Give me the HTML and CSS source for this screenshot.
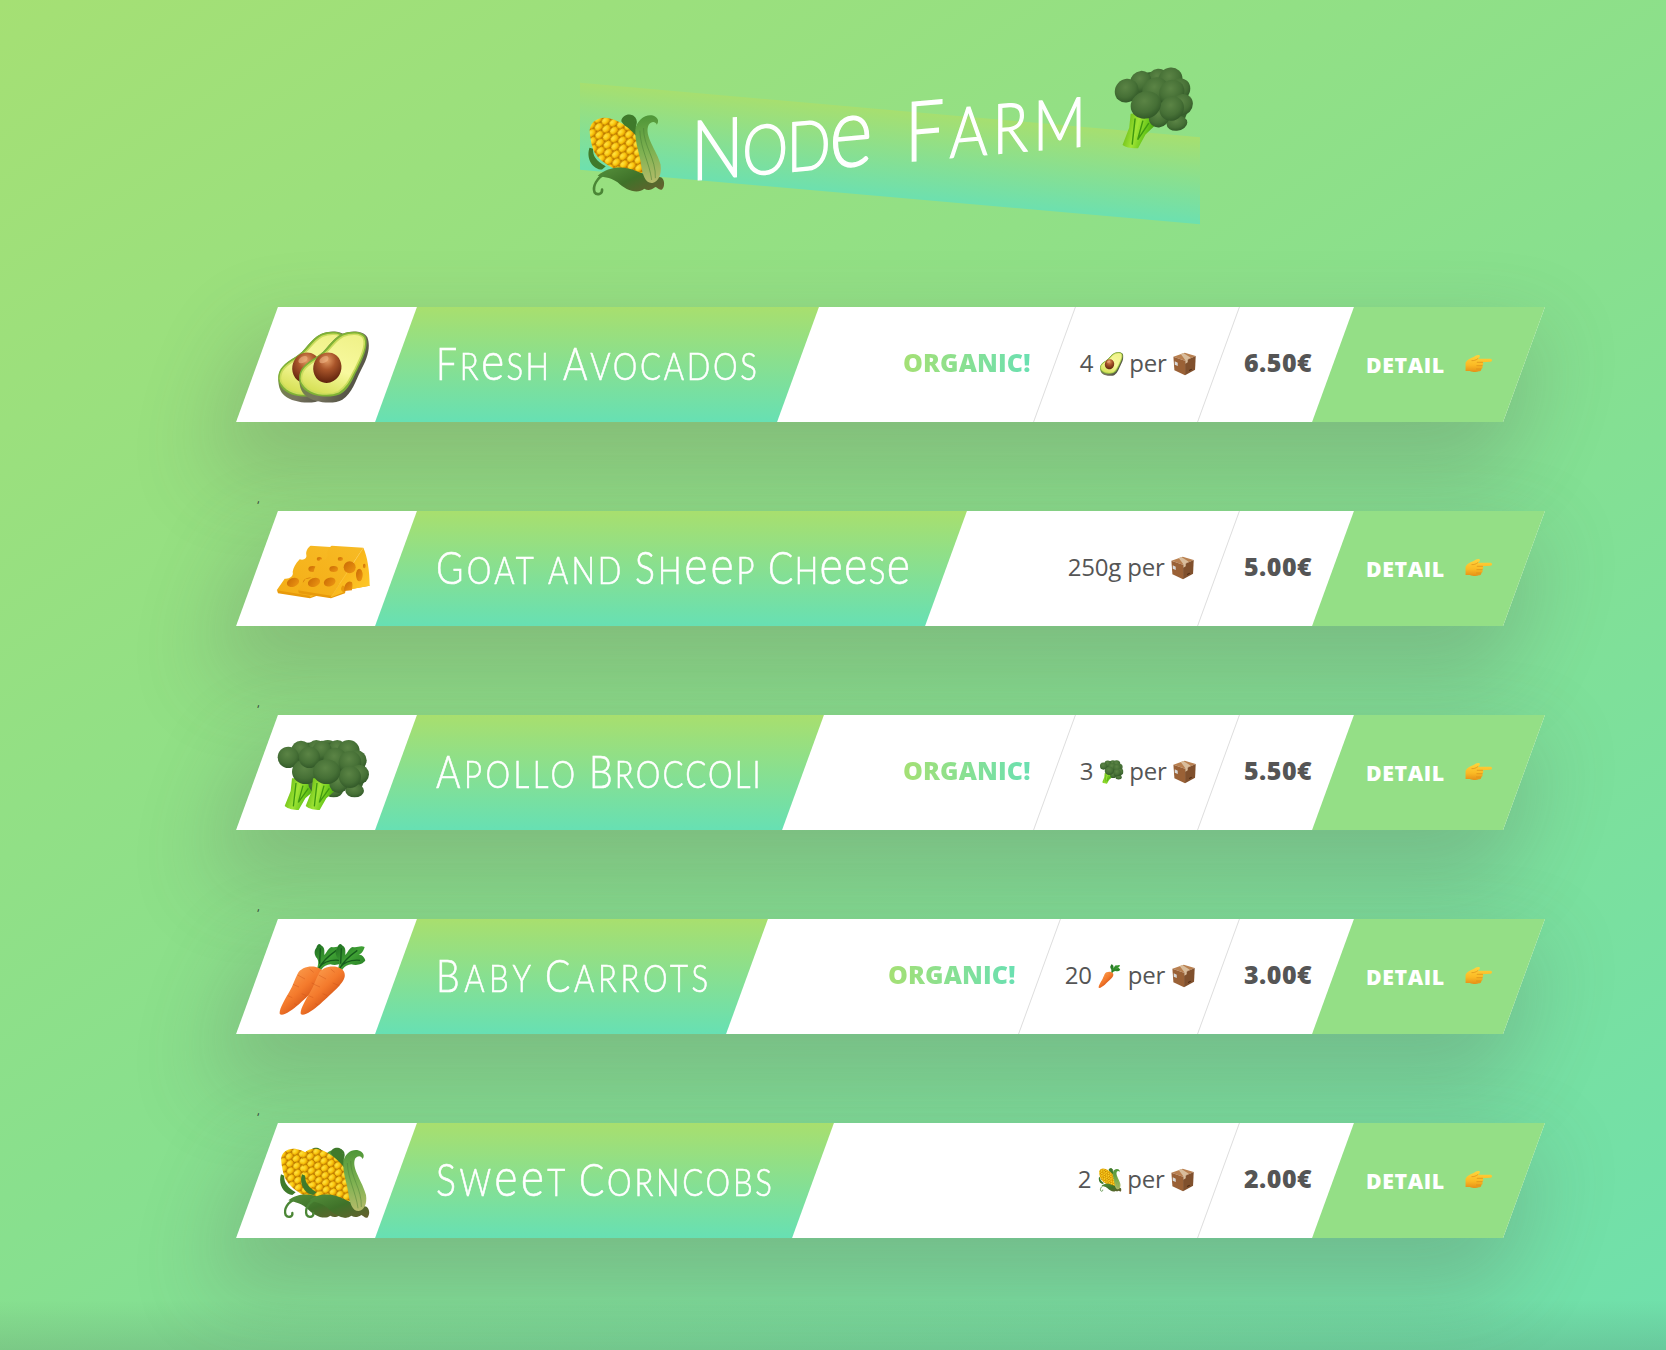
FILE: index.html
```html
<!DOCTYPE html>
<html lang="en">
<head>
<meta charset="utf-8">
<title>Node Farm</title>
<link rel="stylesheet" href="styles.css">
</head>
<body>
<svg class="defs" width="0" height="0" aria-hidden="true">
  <defs>
    <linearGradient id="flesh" x1=".7" y1="0" x2=".3" y2="1"><stop offset="0" stop-color="#f0f28a"/><stop offset=".55" stop-color="#f8f99f"/><stop offset="1" stop-color="#d6e055"/></linearGradient>
    <radialGradient id="pit" cx=".42" cy=".28" r=".75"><stop offset="0" stop-color="#e39a63"/><stop offset=".4" stop-color="#a9552a"/><stop offset="1" stop-color="#5c200b"/></radialGradient>
    <linearGradient id="skin" x1="0" y1="0" x2="1" y2=".6"><stop offset="0" stop-color="#6f9a2c"/><stop offset=".6" stop-color="#77745f"/><stop offset="1" stop-color="#4a4a3e"/></linearGradient>
    <linearGradient id="cheeseTop" x1="0" y1="1" x2="1" y2="0"><stop offset="0" stop-color="#f4ad16"/><stop offset="1" stop-color="#f7bb25"/></linearGradient>
    <linearGradient id="cheeseSide" x1="0" y1="0" x2="1" y2="1"><stop offset="0" stop-color="#f4a70f"/><stop offset="1" stop-color="#ffcb2c"/></linearGradient>
    <linearGradient id="hole" x1="0" y1="0" x2="1" y2="1"><stop offset="0" stop-color="#c96a05"/><stop offset="1" stop-color="#ee9712"/></linearGradient>
    <radialGradient id="floret" cx=".45" cy=".35" r=".65"><stop offset="0" stop-color="#5b8445"/><stop offset=".65" stop-color="#467036"/><stop offset="1" stop-color="#335a29"/></radialGradient>
    <linearGradient id="stem" x1="0" y1=".3" x2="1" y2=".6"><stop offset="0" stop-color="#5fb410"/><stop offset=".4" stop-color="#a0e535"/><stop offset=".7" stop-color="#65c518"/><stop offset="1" stop-color="#3d8d10"/></linearGradient>
    <linearGradient id="root" x1=".2" y1=".2" x2=".7" y2=".8"><stop offset="0" stop-color="#fa9a4b"/><stop offset=".5" stop-color="#f47a2c"/><stop offset="1" stop-color="#cf4d13"/></linearGradient>
    <linearGradient id="leaf" x1="0" y1="0" x2="1" y2="1"><stop offset="0" stop-color="#1d6b20"/><stop offset=".5" stop-color="#3fa034"/><stop offset="1" stop-color="#237a22"/></linearGradient>
    <linearGradient id="husk" x1="0" y1="0" x2="0" y2="1"><stop offset="0" stop-color="#4f9638"/><stop offset=".55" stop-color="#80b252"/><stop offset="1" stop-color="#b5bb6a"/></linearGradient>
    <linearGradient id="huskDark" x1="0" y1="0" x2="1" y2="1"><stop offset="0" stop-color="#558f3b"/><stop offset=".5" stop-color="#3f7229"/><stop offset="1" stop-color="#67602f"/></linearGradient>
    <radialGradient id="kernel" cx=".4" cy=".3" r=".7"><stop offset="0" stop-color="#ffe445"/><stop offset=".6" stop-color="#fbc80f"/><stop offset="1" stop-color="#e39d00"/></radialGradient>
    <pattern id="kernels" width="24" height="36" patternUnits="userSpaceOnUse" patternTransform="rotate(-38)">
      <rect width="24" height="36" fill="#b87600"/>
      <ellipse cx="12" cy="9" rx="11.2" ry="9" fill="url(#kernel)"/>
      <ellipse cx="0" cy="27" rx="11.2" ry="9" fill="url(#kernel)"/>
      <ellipse cx="24" cy="27" rx="11.2" ry="9" fill="url(#kernel)"/>
    </pattern>
    <linearGradient id="hand" x1="0" y1="0" x2="0" y2="1"><stop offset="0" stop-color="#ffd53d"/><stop offset=".6" stop-color="#fbb924"/><stop offset="1" stop-color="#e58f17"/></linearGradient>

    <symbol id="avocado" viewBox="0 0 216 216">
      <path fill="url(#skin)" d="M4 150C2 118 20 98 55 78 88 58 98 26 132 9 155-1 195-3 208 19c12 30-2 69-20 100-15 30-25 66-55 87-27 16-85 9-109-11C10 184 5 168 4 150z"/>
      <path fill="#7fb236" d="M4 142C2 116 20 98 55 78 88 58 98 26 132 9 153 0 191-2 202 16c12 27-8 68-24 100-15 29-24 58-52 74-29 12-78 8-101-10C11 170 5 158 4 142z"/>
      <path fill="url(#flesh)" stroke="#cbdc5c" stroke-width="5" d="M10 143c0-26 17-41 50-59 36-21 44-52 76-68 20-8 51-10 60 5 10 23-9 61-24 91-15 28-24 54-51 70-25 12-70 8-90-8-13-10-20-18-21-31z"/>
      <ellipse cx="88" cy="110" rx="42" ry="46" fill="url(#pit)" transform="rotate(18 88 110)"/>
      <ellipse cx="78" cy="86" rx="15" ry="9" fill="#f4bc8c" opacity=".55" transform="rotate(-30 78 86)"/>
    </symbol>

    <symbol id="cheese" viewBox="0 0 216 216" overflow="visible">
      <path fill="#e89a0b" d="M0 166l3 9 96 15 42-15 2-10 72-13-10-18z"/>
      <path fill="url(#cheeseTop)" d="M-1 166l24-35c14 2 28-8 24-20 2-12 8-25 21-38 14 4 22-4 20-13-2-12 4-22 13-28l95 6-96 144z"/>
      <path fill="url(#cheeseSide)" d="M196 38c12 25 19 70 19 114l-72 14c-1-10-8-20-12-11-3 6-3 12 6 17l-38 15z"/>
      <path fill="none" stroke="#fbc63f" stroke-width="2" d="M196 39L99 186"/>
      <g fill="url(#hole)"><ellipse cx="127" cy="72" rx="8" ry="6"/><ellipse cx="107" cy="102" rx="13" ry="9"/><ellipse cx="95" cy="141" rx="18" ry="13" transform="rotate(-20 95 141)"/><ellipse cx="48" cy="142" rx="19" ry="13" transform="rotate(-20 48 142)"/><ellipse cx="155" cy="97" rx="18" ry="18"/><ellipse cx="184" cy="120" rx="10" ry="19"/><ellipse cx="199" cy="93" rx="4" ry="7"/><path d="M138 168c0-24 14-34 24-26 3 8 0 18 0 24z"/></g>
    </symbol>

    <symbol id="broccoli" viewBox="0 0 216 216">
      <path fill="url(#stem)" d="M45 118l-4 38-18 45c10 9 28 12 42 12l20-35 32-28-6-32z"/>
      <path fill="none" stroke="#3f9a10" stroke-width="4" d="M57 132l-8 70M78 140l-14 50 30-42"/>
      <path fill="#3a632e" d="M40 40L70 12l80-4 46 50 10 50-20 50-40-4-30-40-70-30z"/>
      <g fill="url(#floret)"><circle cx="118" cy="30" r="27"/><circle cx="72" cy="34" r="29"/><circle cx="152" cy="36" r="33"/><ellipse cx="170" cy="155" rx="28" ry="20"/><circle cx="122" cy="134" r="28"/><circle cx="112" cy="62" r="36"/><circle cx="34" cy="55" r="32"/><circle cx="176" cy="64" r="30"/><circle cx="156" cy="70" r="34"/><circle cx="184" cy="106" r="29"/><circle cx="156" cy="114" r="33"/><ellipse cx="86" cy="98" rx="41" ry="37"/></g>
    </symbol>

    <symbol id="carrot" viewBox="0 0 216 216">
      <path fill="url(#leaf)" d="M120 78c4-14 6-22 0-32-8-10-10-22-2-32 4-12 10-14 16-6 10 6 8 16 8 28 8-8 10-20 22-24 14 4 22-6 36 0-4 12-8 20-20 24 10-2 18 4 22 16-8 14-28 16-42 12-10 2-20 4-28 18z"/>
      <path fill="none" stroke="#155c1b" stroke-width="4" d="M126 76c8-18 24-34 52-54M126 74c14-18 36-24 60-22M128 62L130 16"/>
      <path fill="url(#root)" d="M62 92c12-24 60-30 76-6 12 26-22 50-72 98-20 17-46 36-57 30-6-10 14-44 28-68 12-20 16-38 25-54z"/>
      <path fill="none" stroke="#c9521a" stroke-width="2" opacity=".6" d="M62 96l22 12M104 120l20 8M48 124l18 8M74 152l14 6M32 158l14 6M52 182l8 4M98 78l12 10"/>
    </symbol>

    <symbol id="corn" viewBox="0 0 216 216">
      <path fill="#3f7a2b" d="M12 82c-10 30 10 60 34 62l10-8C30 120 20 104 22 86zM98 18c2-20 34-22 36-2l8 52c-14-6-30-30-44-50z"/>
      <path fill="none" stroke="#3f7a2b" stroke-width="6" stroke-linecap="round" d="M112 8c20-6 30 10 22 28"/>
      <path fill="url(#kernels)" d="M13 44C8 12 40-4 72 10c38 14 82 58 94 104 6 28-2 52-24 52-42-4-106-40-119-76-6-16-8-30-10-46z"/>
      <path fill="url(#huskDark)" d="M34 160c28-24 72-22 104-4 22 12 44 16 62 22 14 0 18 24 8 34-8 2-12-6-18-8-12 8-20 8-30 2-18 14-50 0-72-24-22-16-42-18-54-22z"/>
      <path fill="none" stroke="#4b8636" stroke-width="7" stroke-linecap="round" d="M60 154c-30 10-40 34-34 50 6 9 22 7 20-6"/>
      <path fill="url(#husk)" d="M136 44c4-28 34-44 54-30 10 8 8 16 4 22-4-10-14-12-22-2-14 28 22 70 32 110 4 28-6 46-22 48-20 0-26-24-30-48-4-36-18-64-16-100z"/>
      <path fill="none" stroke="#477e34" stroke-width="2" opacity=".7" d="M148 48c2 50 26 88 32 136M158 42c0 50 34 84 32 138"/>
    </symbol>

    <symbol id="box" viewBox="0 0 72 72">
      <path fill="#b98050" d="M2 14L36 2l33 10-32 14z"/><path fill="#9a6136" d="M2 14l35 12v44L5 55z"/><path fill="#80502d" d="M69 12L37 26v44l30-17z"/>
      <path fill="#d9bd9c" d="M24 6l8-3 22 14-9 5v9l-7 4V25z"/><path fill="#d8d8d8" d="M6 28l9 4v10l-9-4z"/><path fill="#4a2711" d="M49 54l8-4v3l-8 4z"/>
    </symbol>

    <symbol id="finger" viewBox="0 0 84 66">
      <path fill="url(#hand)" d="M3 32c4-8 14-14 24-17 7-5 13-8 18-5 3 3 0 8-5 10l38 0c6 1 6 8 0 9l-24 2c4 4 3 8-1 10 3 5 1 8-3 10 1 5-2 7-7 7-8 4-20 2-27-1L3 57z"/>
      <path fill="none" stroke="#d98d18" stroke-width="2" stroke-linecap="round" d="M54 31H38M53 41H37M49 51H36M40 20c-6 5-12 6-18 6"/>
    </symbol>
  </defs>
</svg>

<div class="container">
  <h1 class="heading">
    <svg class="heading-icon"><use href="#corn"/></svg>
    <span class="word node" data-fit="182">Nod<span class="e">e</span></span>
    <span class="word farm" data-fit="181">Farm</span>
    <svg class="heading-icon broccoli"><use href="#broccoli"/></svg>
  </h1>

  <main class="cards">
    <figure class="card">
      <div class="emoji"><svg><use href="#avocado"/></svg><svg><use href="#avocado"/></svg></div>
      <div class="title title-avocado"><h2><span class="word" data-fit="113">Fr<span class="e">e</span>sh</span> <span class="word" data-fit="194">Avocados</span></h2></div>
      <div class="details">
        <div class="cell organic"><p data-fit="128">Organic!</p></div>
        <div class="cell qty"><p>4 <svg><use href="#avocado"/></svg> per <svg><use href="#box"/></svg></p></div>
        <div class="cell price"><p data-fit="68">6.50€</p></div>
      </div>
      <a class="link"><span data-fit="78">Detail</span><svg><use href="#finger"/></svg></a>
    </figure>
    <div class="mark">,</div>
    <figure class="card">
      <div class="emoji"><svg><use href="#cheese"/></svg><svg><use href="#cheese"/></svg></div>
      <div class="title title-cheese"><h2><span class="word" data-fit="98">Goat</span> <span class="word low" data-fit="73">and</span> <span class="word" data-fit="119">Sh<span class="e">ee</span>p</span> <span class="word" data-fit="142">Ch<span class="e">ee</span>s<span class="e">e</span></span></h2></div>
      <div class="details">
        <div class="cell qty plain"><p>250g per <svg><use href="#box"/></svg></p></div>
        <div class="cell price"><p data-fit="68">5.00€</p></div>
      </div>
      <a class="link"><span data-fit="78">Detail</span><svg><use href="#finger"/></svg></a>
    </figure>
    <div class="mark">,</div>
    <figure class="card">
      <div class="emoji"><svg><use href="#broccoli"/></svg><svg><use href="#broccoli"/></svg></div>
      <div class="title title-broccoli"><h2><span class="word" data-fit="139">Apollo</span> <span class="word" data-fit="172">Broccoli</span></h2></div>
      <div class="details">
        <div class="cell organic"><p data-fit="128">Organic!</p></div>
        <div class="cell qty"><p>3 <svg><use href="#broccoli"/></svg> per <svg><use href="#box"/></svg></p></div>
        <div class="cell price"><p data-fit="68">5.50€</p></div>
      </div>
      <a class="link"><span data-fit="78">Detail</span><svg><use href="#finger"/></svg></a>
    </figure>
    <div class="mark">,</div>
    <figure class="card">
      <div class="emoji"><svg><use href="#carrot"/></svg><svg><use href="#carrot"/></svg></div>
      <div class="title title-carrot"><h2><span class="word" data-fit="95">Baby</span> <span class="word" data-fit="163">Carrots</span></h2></div>
      <div class="details">
        <div class="cell organic"><p data-fit="128">Organic!</p></div>
        <div class="cell qty wide"><p>20 <svg><use href="#carrot"/></svg> per <svg><use href="#box"/></svg></p></div>
        <div class="cell price"><p data-fit="68">3.00€</p></div>
      </div>
      <a class="link"><span data-fit="78">Detail</span><svg><use href="#finger"/></svg></a>
    </figure>
    <div class="mark">,</div>
    <figure class="card">
      <div class="emoji"><svg><use href="#corn"/></svg><svg><use href="#corn"/></svg></div>
      <div class="title title-corn"><h2><span class="word" data-fit="129">Sw<span class="e">ee</span>t</span> <span class="word" data-fit="193">Corncobs</span></h2></div>
      <div class="details">
        <div class="cell qty plain"><p>2 <svg><use href="#corn"/></svg> per <svg><use href="#box"/></svg></p></div>
        <div class="cell price"><p data-fit="68">2.00€</p></div>
      </div>
      <a class="link"><span data-fit="78">Detail</span><svg><use href="#finger"/></svg></a>
    </figure>
  </main>
</div>
<script src="fit.js"></script>
</body>
</html>
```
FILE: fit.js
```js
// Tracks each label so that it fills its intended width.
// Display words are also condensed, for a narrow art-deco look.
document.querySelectorAll('[data-fit]').forEach(function (el) {
  var target = Number(el.dataset.fit);
  var display = el.classList.contains('word');
  var scale = display ? 0.84 : 1;
  var full = target / scale;
  var spacing = (full - el.offsetWidth) / (el.textContent.length - 1);
  el.style.letterSpacing = spacing + 'px';
  el.style.marginRight = (target - full - spacing) + 'px';
  if (display) el.style.transform = 'scaleX(' + scale + ')';
});
```
FILE: styles.css
```css
* { margin: 0; padding: 0; box-sizing: border-box; }

body {
  width: 1666px;
  height: 1350px;
  overflow: hidden;
  color: #555;
  font-family: "Open Sans", "Noto Sans", sans-serif;
  background:
    linear-gradient(to top, rgba(70, 90, 80, .17), rgba(70, 90, 80, 0) 50px),
    linear-gradient(148deg, #a5e074, #88e08e 52%, #6fe0ac);
}

.defs { position: absolute; }

.container { width: 1267px; margin-left: 257px; }

.heading {
  position: relative;
  display: flex;
  align-items: flex-start;
  height: 307px;
  padding: 90px 0 0 328px;
  color: #fff;
  transform: skewY(-5deg);
  transform-origin: 633px 130px;
}

.heading::before {
  content: "";
  position: absolute;
  z-index: -1;
  left: 323px;
  top: 110px;
  width: 620px;
  height: 87px;
  background: linear-gradient(to bottom, #a8df6e, #6ae0b2);
  transform: skewY(9.94deg);
  opacity: .93;
}

.heading-icon { flex: none; width: 80px; height: 82px; }
.heading .word { font-size: 99px; line-height: 82px; margin-top: -6px; -webkit-text-stroke: 1.4px #fff; }
.heading .node { margin-left: 26px; }
.heading .farm { margin-left: 32px; }
.heading .broccoli { margin-left: 29px; }

.word {
  display: inline-block;
  flex: none;
  font-family: Lato, "Open Sans", sans-serif;
  font-weight: 300;
  font-variant: small-caps;
  white-space: nowrap;
  transform-origin: 0 50%;
  -webkit-text-stroke: .6px #fff;
}
.word::first-letter { font-size: .84em; }
.low::first-letter { font-size: 1em; }
.e { font-variant: normal; }

.card {
  display: flex;
  height: 115px;
  background: #fff;
  transform: skewX(-20deg);
  box-shadow: 0 40px 80px 13px rgba(90, 80, 80, .24);
}

.emoji {
  display: flex;
  width: 139px;
  padding: 24px 0 0 20px;
  transform: skewX(20deg);
}
.emoji svg { flex: none; width: 72px; height: 72px; overflow: visible; }
.emoji svg + svg { margin-left: -51.5px; }

.title {
  flex: none;
  display: flex;
  align-items: center;
  padding: 0 0 6px 39px;
  background: linear-gradient(to bottom, #a8df6e, #67e0b3);
}
.title h2 {
  display: flex;
  gap: 14px;
  color: #fff;
  transform: skewX(20deg);
}
.title .word { font-size: 53px; line-height: 64px; }
.title-avocado { width: 402px; }
.title-cheese { width: 550px; }
.title-broccoli { width: 407px; }
.title-carrot { width: 351px; }
.title-corn { width: 417px; }

.details { flex: 1; display: flex; justify-content: flex-end; }

.cell {
  display: flex;
  align-items: center;
  padding: 0 24px 5px;
  font-size: 25px;
  white-space: nowrap;
}
.cell p { transform: skewX(20deg); }
.cell svg { width: 24px; height: 24px; vertical-align: -4px; }

.organic { font-weight: 800; text-transform: uppercase; }
.organic p {
  color: transparent;
  background: linear-gradient(to right, #a5e074, #6ae0b2);
  -webkit-background-clip: text;
  background-clip: text;
}
.qty { width: 164px; border-left: 1px solid #ddd; font-size: 24px; letter-spacing: -.2px; }
.wide { width: 179px; }
.plain { width: auto; border-left: 0; }
.price { width: 115px; border-left: 1px solid #ddd; font-weight: 800; }

.link {
  display: flex;
  align-items: center;
  width: 191px;
  padding: 0 0 0 33px;
  color: #fff;
  background: #94df86;
  font-size: 21.3px;
  font-weight: 800;
  text-transform: uppercase;
}
.link span, .link svg { transform: skewX(20deg); }
.link svg { width: 28px; height: 22px; margin-left: 20px; margin-top: -4px; }

.mark { height: 89px; padding-top: 70px; color: #333; font-size: 11px; line-height: 14px; }
```
